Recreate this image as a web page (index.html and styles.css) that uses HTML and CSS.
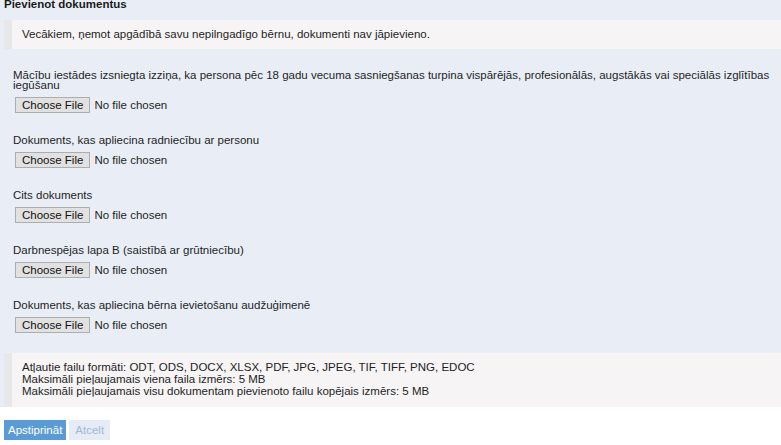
FILE: index.html
```html
<!DOCTYPE html>
<html lang="lv">
<head>
    <meta charset="UTF-8">
    <meta name="viewport" content="width=device-width, initial-scale=1.0">
    <title>Pievienot dokumentus</title>
    <link rel="stylesheet" href="styles.css">
</head>
<body>
    <div class="panel">
        <h3 class="panel-title">Pievienot dokumentus</h3>

        <div class="note">Vecākiem, ņemot apgādībā savu nepilngadīgo bērnu, dokumenti nav jāpievieno.</div>

        <div class="doc-list">
            <div class="doc-item">
                <label>Mācību iestādes izsniegta izziņa, ka persona pēc 18 gadu vecuma sasniegšanas turpina vispārējās, profesionālās, augstākās vai speciālās izglītības iegūšanu</label>
                <input type="file">
            </div>
            <div class="doc-item">
                <label>Dokuments, kas apliecina radniecību ar personu</label>
                <input type="file">
            </div>
            <div class="doc-item">
                <label>Cits dokuments</label>
                <input type="file">
            </div>
            <div class="doc-item">
                <label>Darbnespējas lapa B (saistībā ar grūtniecību)</label>
                <input type="file">
            </div>
            <div class="doc-item">
                <label>Dokuments, kas apliecina bērna ievietošanu audžuģimenē</label>
                <input type="file">
            </div>
        </div>

        <div class="note note-info">
            Atļautie failu formāti: ODT, ODS, DOCX, XLSX, PDF, JPG, JPEG, TIF, TIFF, PNG, EDOC<br>
            Maksimāli pieļaujamais viena faila izmērs: 5 MB<br>
            Maksimāli pieļaujamais visu dokumentam pievienoto failu kopējais izmērs: 5 MB
        </div>
    </div>

    <div class="actions">
        <button class="btn btn-primary">Apstiprināt</button>
        <button class="btn btn-light">Atcelt</button>
    </div>
</body>
</html>
```

FILE: styles.css
```css
body {
    font-family: "Liberation Sans", Arial, sans-serif;
    font-size: 11.5px;
    color: #1e1e1e;
    background-color: #fff;
    margin: 0;
    padding: 0;
}
.panel {
    background-color: #e9eef6;
}
.panel-title {
    margin: -4px 0 0 0;
    padding: 0 4px;
    font-size: 11.5px;
    line-height: 16px;
    color: #1a1a1a;
}
.note {
    margin: 8px 0 0 4px;
    border-left: 8px solid #e8e8ea;
    background-color: #f6f4f5;
    padding: 8px 10px;
    line-height: 13px;
}
.doc-list {
    display: flex;
    flex-direction: column;
    gap: 22px;
    padding: 21px 0 20px 13px;
}
.doc-item label {
    display: block;
    line-height: 10px;
    margin-bottom: 7px;
}
.doc-item input[type="file"] {
    display: block;
    height: 16px;
    margin-left: 2px;
    font-family: "Liberation Sans", Arial, sans-serif;
    font-size: 11.5px;
    color: #1e1e1e;
}
.doc-item input[type="file"]::file-selector-button {
    font-family: "Liberation Sans", Arial, sans-serif;
    font-size: 11.5px;
    height: 16px;
    padding: 0 6px;
    margin-right: 4px;
    border: 1px solid #adadad;
    border-radius: 0;
    background-color: #e1e1e1;
    color: #111;
}
.note-info {
    margin-top: 0;
    padding: 8px 10px 10px;
    line-height: 12px;
}
.actions {
    padding: 13px 4px;
    display: flex;
    gap: 3px;
}
.btn {
    border: none;
    border-radius: 0;
    font-family: "Liberation Sans", Arial, sans-serif;
    font-size: 11.5px;
    height: 20px;
    padding: 0 4px;
    cursor: pointer;
}
.btn-primary {
    background-color: #5b9bd5;
    color: #fff;
}
.btn-light {
    background-color: #e6ecf5;
    color: #a3b6da;
    padding: 0 6px;
}
```
